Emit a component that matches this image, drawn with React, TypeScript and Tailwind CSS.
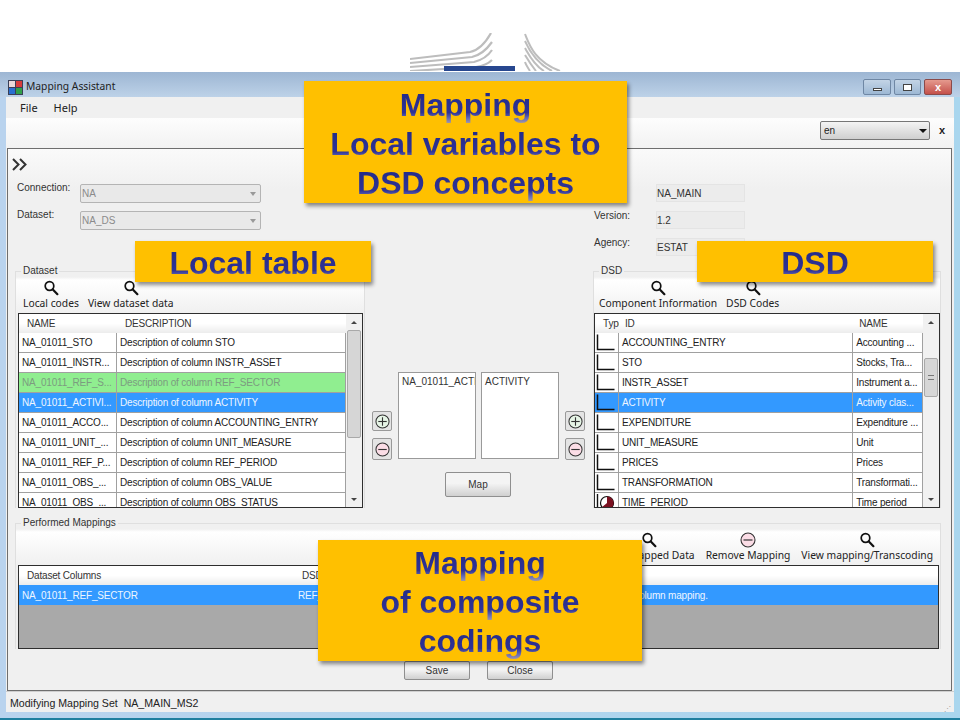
import type { ReactNode } from "react";

const sans = "font-['Liberation_Sans',Arial,sans-serif]";
const ui = "font-['Noto_Sans','Open_Sans',sans-serif]";

function Lens() {
  return (
    <svg width="16" height="16" viewBox="0 0 16 16" fill="none" stroke="#111" className="shrink-0">
      <circle cx="6.5" cy="6" r="4.3" strokeWidth="1.7" />
      <path d="M9.8 9.4l4.6 4.8" strokeWidth="2.2" strokeLinecap="round" />
    </svg>
  );
}

function RoundSign({ plus, size = 15 }: { plus?: boolean; size?: number }) {
  return (
    <svg width={size} height={size} viewBox="0 0 16 16" className="shrink-0">
      <circle cx="8" cy="8" r="7" fill={plus ? "#e6f5e6" : "#fbdde6"} stroke="#333" strokeWidth="1.1" />
      <path d="M3.5 8h9" stroke="#333" strokeWidth="1.2" />
      {plus ? <path d="M8 3.5v9" stroke="#333" strokeWidth="1.2" /> : null}
    </svg>
  );
}

function AxisIcon() {
  return (
    <svg width="21" height="19" viewBox="0 0 21 19" fill="none" stroke="#111" strokeWidth="1.5" className="shrink-0">
      <path d="M2.5 1.5v15h17" />
    </svg>
  );
}

function TimeIcon() {
  return (
    <svg width="21" height="19" viewBox="0 0 21 19" className="shrink-0">
      <path d="M2.5 1v17" stroke="#111" strokeWidth="1.4" />
      <circle cx="12" cy="10" r="6.5" fill="#fff" stroke="#111" strokeWidth="1.2" />
      <path d="M12 10V3.5a6.5 6.5 0 1 1-5 10.6z" fill="#7a1020" />
    </svg>
  );
}

function Logo() {
  return (
    <svg width="160" height="38" viewBox="0 0 160 38" className="block" fill="none">
      <g stroke="#bdbdbd" strokeWidth="2.2">
        <path d="M0 26L60 19C70 17 76 9 81 0" />
        <path d="M0 30L62 24C71 22 77 16 82 9" />
        <path d="M0 34L64 29C72 27 78 23 82 17" />
        <path d="M0 38L66 34C73 33 78 31 82 27" />
      </g>
      <rect x="34" y="33" width="71" height="5" fill="#27478f" />
      <g stroke="#bdbdbd" strokeWidth="2">
        <path d="M115 1C119 11 124 28 150 38" />
        <path d="M115 8C119 17 126 30 142 38" />
        <path d="M115 15C119 22 124 32 134 38" />
        <path d="M115 22C118 27 122 33 126 38" />
        <path d="M115 29C116 32 118 35 120 38" />
      </g>
    </svg>
  );
}

function Combo({ value }: { value: string }) {
  return (
    <div className="flex h-[19px] w-[181px] items-center rounded-[2px] border border-[#b4b4b4] bg-[#e9e9e9] pl-[1px] text-[10px] text-[#8b8b8b]">
      <span className="flex-1">{value}</span>
      <span className="mr-[4px] ml-[4px] h-0 w-0 border-x-[3.5px] border-t-[4px] border-x-transparent border-t-[#999]" />
    </div>
  );
}

function Field({ label, value }: { label: string; value: string }) {
  return (
    <div className="flex items-center">
      <span className="w-[62px] -translate-y-[5px] text-[10px] text-[#333]">{label}</span>
      <div className="flex h-[18px] w-[89px] items-center border border-[#e4e4e4] bg-[#ececec] text-[10px] text-[#333]">
        {value}
      </div>
    </div>
  );
}

function ToolButton({ label, icon, className = "" }: { label: string; icon?: ReactNode; className?: string }) {
  return (
    <div className={`flex flex-col items-center ${className}`}>
      {icon ?? <Lens />}
      <span className={`${ui} whitespace-nowrap text-[10.3px] leading-[14px] text-[#222]`}>{label}</span>
    </div>
  );
}

function Group({ title, className, children }: { title: string; className: string; children: ReactNode }) {
  return (
    <div className={`relative border border-b-0 border-[#dfdfdf] ${className}`}>
      <span className="absolute -top-[7px] left-[5px] bg-[#f0f0f0] px-[2px] text-[10px] leading-[12px] text-[#333]">
        {title}
      </span>
      {children}
    </div>
  );
}

function Scrollbar({ before, thumb }: { before: number; thumb: number }) {
  return (
    <div className="flex w-[16px] shrink-0 flex-col items-center bg-[#f1f1f1]">
      <div className="flex h-[16px] items-center">
        <span className="h-0 w-0 border-x-[3px] border-b-[3px] border-x-transparent border-b-[#444]" />
      </div>
      <div className="shrink-0" style={{ height: before }} />
      <div
        className="flex w-[14px] shrink-0 items-center justify-center rounded-[2px] border border-[#a9a9a9] bg-[#d6d6d6]"
        style={{ height: thumb }}
      >
        {thumb < 60 ? <span className="h-[5px] w-[6px] border-y border-[#777]" /> : null}
      </div>
      <div className="flex-1" />
      <div className="flex h-[16px] items-center">
        <span className="h-0 w-0 border-x-[3px] border-t-[3px] border-x-transparent border-t-[#444]" />
      </div>
    </div>
  );
}

type Cell = { text?: string; icon?: ReactNode };
type RowKind = "plain" | "mapped" | "selected";

function Row({ cells, widths, kind }: { cells: Cell[]; widths: string[]; kind: RowKind }) {
  const color =
    kind === "selected"
      ? "bg-[#3399ff] text-[#eef6ff]"
      : kind === "mapped"
        ? "bg-[#90ee90] text-[#7c9c80]"
        : "bg-white text-[#222]";
  return (
    <div className={`flex h-[20px] shrink-0 border-b border-[#a0a0a0] ${color}`}>
      {cells.map((cell, i) => (
        <div
          key={i}
          className={`flex items-center overflow-hidden whitespace-nowrap border-r border-[#a0a0a0] ${cell.icon ? "" : "pl-[3px]"} ${widths[i]}`}
        >
          {cell.icon ?? cell.text}
        </div>
      ))}
    </div>
  );
}

const localRows: { cells: string[]; kind?: RowKind }[] = [
  { cells: ["NA_01011_STO", "Description of column STO"] },
  { cells: ["NA_01011_INSTR...", "Description of column INSTR_ASSET"] },
  { cells: ["NA_01011_REF_S...", "Description of column REF_SECTOR"], kind: "mapped" },
  { cells: ["NA_01011_ACTIVI...", "Description of column ACTIVITY"], kind: "selected" },
  { cells: ["NA_01011_ACCO...", "Description of column ACCOUNTING_ENTRY"] },
  { cells: ["NA_01011_UNIT_...", "Description of column UNIT_MEASURE"] },
  { cells: ["NA_01011_REF_P...", "Description of column REF_PERIOD"] },
  { cells: ["NA_01011_OBS_...", "Description of column OBS_VALUE"] },
  { cells: ["NA_01011_OBS_...", "Description of column OBS_STATUS"] },
];

const dsdRows: { id: string; name: string; kind?: RowKind; time?: boolean }[] = [
  { id: "ACCOUNTING_ENTRY", name: "Accounting ..." },
  { id: "STO", name: "Stocks, Tra..." },
  { id: "INSTR_ASSET", name: "Instrument a..." },
  { id: "ACTIVITY", name: "Activity clas...", kind: "selected" },
  { id: "EXPENDITURE", name: "Expenditure ..." },
  { id: "UNIT_MEASURE", name: "Unit" },
  { id: "PRICES", name: "Prices" },
  { id: "TRANSFORMATION", name: "Transformati..." },
  { id: "TIME_PERIOD", name: "Time period", time: true },
];

function HeaderCell({ label, className }: { label: string; className: string }) {
  return <div className={`flex items-center overflow-hidden whitespace-nowrap pl-[8px] ${className}`}>{label}</div>;
}

function Header({ children }: { children: ReactNode }) {
  return (
    <div className="flex h-[19px] shrink-0 bg-[linear-gradient(#ffffff_50%,#ececec)] text-[#333]">{children}</div>
  );
}

function LocalTable() {
  const widths = ["w-[98px]", "w-[229px]"];
  return (
    <div className="mr-[1px] ml-[2px] flex h-[195px] overflow-hidden border-[1.5px] border-[#2e2e2e] bg-white text-[10px] tracking-[-0.18px]">
      <div className="min-w-0 flex-1 overflow-hidden">
        <Header>
          <HeaderCell label="NAME" className="w-[98px]" />
          <HeaderCell label="DESCRIPTION" className="w-[229px]" />
        </Header>
        {localRows.map((r, i) => (
          <Row key={i} widths={widths} kind={r.kind ?? "plain"} cells={r.cells.map((text) => ({ text }))} />
        ))}
      </div>
      <Scrollbar before={0} thumb={108} />
    </div>
  );
}

function DsdTable() {
  const widths = ["w-[24px]", "w-[235px]", "w-[70px]"];
  return (
    <div className="flex h-[195px] overflow-hidden border-[1.5px] border-[#2e2e2e] bg-white text-[10px] tracking-[-0.18px]">
      <div className="min-w-0 flex-1 overflow-hidden">
        <Header>
          <HeaderCell label="Type" className="w-[24px]" />
          <HeaderCell label="ID" className="w-[235px] !pl-[6px]" />
          <HeaderCell label="NAME" className="w-[70px] !pl-[6px]" />
        </Header>
        {dsdRows.map((r, i) => (
          <Row
            key={i}
            widths={widths}
            kind={r.kind ?? "plain"}
            cells={[{ icon: r.time ? <TimeIcon /> : <AxisIcon /> }, { text: r.id }, { text: r.name }]}
          />
        ))}
      </div>
      <Scrollbar before={28} thumb={39} />
    </div>
  );
}

function SignButtons() {
  return (
    <div className="flex w-[20px] flex-col gap-[7px]">
      {[true, false].map((plus) => (
        <div
          key={String(plus)}
          className={`flex w-[20px] items-center justify-center rounded-[2px] border border-[#999] bg-[#e4e4e4] ${plus ? "h-[20px]" : "h-[22px]"}`}
        >
          <RoundSign plus={plus} />
        </div>
      ))}
    </div>
  );
}

function PushButton({ label, className }: { label: string; className: string }) {
  return (
    <div
      className={`flex items-center justify-center rounded-[2px] border border-[#8f8f8f] bg-[linear-gradient(#f4f4f4_45%,#d0d0d0)] text-[10px] text-[#333] ${className}`}
    >
      {label}
    </div>
  );
}

function CalloutLine({ text }: { text: string }) {
  return (
    <span className="block bg-[linear-gradient(#1f2a86_0%,#2f3296_68%,#6a6fb8_84%,#b9a9a0_100%)] bg-clip-text text-transparent">
      {text}
    </span>
  );
}

function Callout({ lines, className }: { lines: string[]; className: string }) {
  return (
    <div
      className={`absolute flex flex-col items-center justify-center bg-[#ffc000] pt-[4px] text-center text-[32px] leading-[39px] font-bold shadow-[2px_3px_4px_rgba(0,0,0,0.45)] ${sans} ${className}`}
    >
      {lines.map((line) => (
        <CalloutLine key={line} text={line} />
      ))}
    </div>
  );
}

function CaptionButton({ className, children }: { className: string; children: ReactNode }) {
  return (
    <div className={`flex h-[16px] items-center justify-center rounded-[2px] border border-[#6f87a4] ${className}`}>
      {children}
    </div>
  );
}

export default function App() {
  return (
    <div className={`relative flex h-[720px] w-[960px] flex-col overflow-hidden bg-white ${sans}`}>
      <div className="h-[72px] shrink-0 overflow-hidden pt-[33px] pl-[410px]">
        <Logo />
      </div>

      <div className="flex min-h-0 flex-1 flex-col border-b-[2px] border-[#1f7f9f] bg-[linear-gradient(90deg,#b9d3ee,#a9d6ee)] pb-[6px]">
        <div className="flex h-[25px] shrink-0 items-center bg-[linear-gradient(#9db6d3,#bdd2e8)] pt-[5px] pr-[8px] pl-[8px] text-[10.3px] text-[#222]">
          <svg width="15" height="15" viewBox="0 0 15 15" className="mr-[3px] shrink-0">
            <rect width="15" height="15" fill="#3a3f56" />
            <rect x="1" y="1" width="6" height="6" fill="#e9d9d9" />
            <rect x="8" y="1" width="6" height="6" fill="#d63b3b" />
            <rect x="1" y="8" width="6" height="6" fill="#2a6fd0" />
            <rect x="8" y="8" width="6" height="6" fill="#31a04a" />
          </svg>
          <span className={ui}>Mapping Assistant</span>
          <div className="ml-auto flex gap-[3px]">
            <CaptionButton className="w-[28px] bg-[linear-gradient(#c3d4e6,#9db8d4)]">
              <span className="mt-[4px] h-[3px] w-[9px] border border-[#444] bg-white" />
            </CaptionButton>
            <CaptionButton className="w-[27px] bg-[linear-gradient(#c3d4e6,#9db8d4)]">
              <span className="h-[7px] w-[9px] border border-[#444] bg-white" />
            </CaptionButton>
            <CaptionButton className="w-[28px] border-[#8a4a4a] bg-[linear-gradient(#e59a8e,#c4504a)]">
              <span className="text-[11px] leading-none font-bold text-white">x</span>
            </CaptionButton>
          </div>
        </div>

        <div className="mx-[6px] flex min-h-0 flex-1 flex-col bg-[#f0f0f0]">
          <div className={`flex h-[21px] shrink-0 items-center gap-[16px] pt-[2px] pl-[14px] text-[11px] text-[#222] ${ui}`}>
            <span>File</span>
            <span>Help</span>
          </div>

          <div className="flex h-[30px] shrink-0 items-center justify-end bg-[linear-gradient(#fdfdfd,#f2f2f2)] pr-[9px] pb-[5px]">
            <div className="flex h-[19px] w-[110px] items-center rounded-[2px] border border-[#777] bg-[linear-gradient(#f4f4f4,#cfcfcf)] pl-[3px] text-[10px] text-[#222]">
              <span className="flex-1">en</span>
              <span className="mr-[2px] h-0 w-0 border-x-[4px] border-t-[4px] border-x-transparent border-t-[#111]" />
            </div>
            <span className="ml-[9px] w-[6px] text-[11px] font-bold text-[#222]">x</span>
          </div>

          <div className="mr-[2px] ml-[1px] flex h-[543px] shrink-0 flex-col border-[1.5px] border-[#6e6e6e] bg-[linear-gradient(#fafafa,#f0f0f0_40px)]">
            <svg width="16" height="13" viewBox="0 0 16 13" fill="none" stroke="#333" strokeWidth="2" className="mt-[9px] ml-[4px] shrink-0">
              <path d="M1 1l5.5 5.5L1 12M8 1l5.5 5.5L8 12" />
            </svg>

            <div className="mt-[13px] flex h-[87px] shrink-0 pl-[9px]">
              <div className="flex w-[577px] flex-col gap-[8px]">
                {[
                  ["Connection:", "NA"],
                  ["Dataset:", "NA_DS"],
                ].map(([label, value]) => (
                  <div key={label} className="flex items-center">
                    <span className="w-[63px] -translate-y-[6px] text-[10px] text-[#333]">{label}</span>
                    <Combo value={value} />
                  </div>
                ))}
              </div>
              <div className="flex flex-col gap-[9px]">
                <Field label="ID:" value="NA_MAIN" />
                <Field label="Version:" value="1.2" />
                <Field label="Agency:" value="ESTAT" />
              </div>
            </div>

            <div className="flex h-[244px] shrink-0 pl-[7px]">
              <Group title="Dataset" className="h-[237px] w-[350px]">
                <div className="flex h-[41px] items-end gap-[9px] bg-[linear-gradient(#f0f0f0_5px,#ffffff_8px,#f0f0f0)] pb-[3px] pl-[7px]">
                  <ToolButton label="Local codes" />
                  <ToolButton label="View dataset data" />
                </div>
                <LocalTable />
              </Group>

              <div className="w-[228px] shrink-0 pt-[101px]">
                <div className="flex items-start gap-[6px] pl-[7px]">
                  <div className="pt-[39px]">
                    <SignButtons />
                  </div>
                  <div className="flex gap-[5px]">
                    {["NA_01011_ACTI", "ACTIVITY"].map((text) => (
                      <div
                        key={text}
                        className="h-[87px] w-[78px] overflow-hidden whitespace-nowrap border border-[#9a9a9a] bg-white pt-[1px] pl-[3px] text-[10px] text-[#333]"
                      >
                        {text}
                      </div>
                    ))}
                  </div>
                  <div className="pt-[39px]">
                    <SignButtons />
                  </div>
                </div>
                <PushButton label="Map" className="mt-[12px] ml-[80px] h-[25px] w-[66px]" />
              </div>

              <Group title="DSD" className="h-[237px] w-[348px]">
                <div className="flex h-[41px] items-end gap-[9px] bg-[linear-gradient(#f0f0f0_5px,#ffffff_8px,#f0f0f0)] pb-[3px] pl-[5px]">
                  <ToolButton label="Component Information" />
                  <ToolButton label="DSD Codes" />
                </div>
                <DsdTable />
              </Group>
            </div>

            <div className="shrink-0 pt-[8px] pb-[12px] pl-[7px]">
              <Group title="Performed Mappings" className="h-[126px] w-[926px]">
                <div className="flex h-[41px] items-end justify-end gap-[11px] bg-[linear-gradient(#f0f0f0_5px,#ffffff_8px,#f0f0f0)] pr-[7px] pb-[3px]">
                  <ToolButton label="View Mapped Data" />
                  <ToolButton label="Remove Mapping" icon={<RoundSign size={16} />} />
                  <ToolButton label="View mapping/Transcoding" />
                </div>
                <div className="mr-[1px] ml-[2px] flex h-[84px] flex-col overflow-hidden border-[1.5px] border-[#2e2e2e] bg-[#a9a9a9] text-[10px] tracking-[-0.18px]">
                  <Header>
                    <HeaderCell label="Dataset Columns" className="w-[275px]" />
                    <HeaderCell label="DSD Concepts" className="w-[280px]" />
                    <HeaderCell label="Type" className="flex-1" />
                  </Header>
                  <div className="flex h-[20px] shrink-0 items-center bg-[#3399ff] text-[#eef6ff]">
                    <span className="w-[279px] pl-[3px]">NA_01011_REF_SECTOR</span>
                    <span className="w-[307px]">REF_SECTOR</span>
                    <span>Single column mapping.</span>
                  </div>
                </div>
              </Group>
            </div>

            <div className="flex shrink-0 gap-[17px] pl-[396px]">
              <PushButton label="Save" className="h-[19px] w-[66px]" />
              <PushButton label="Close" className="h-[19px] w-[66px]" />
            </div>
          </div>

          <div className="flex min-h-0 flex-1 items-center justify-between border-t border-[#cfcfcf] pt-[3px] pl-[4px] text-[10.6px] text-[#222]">
            <span>Modifying Mapping Set&nbsp; NA_MAIN_MS2</span>
            <span className="mt-[10px] mr-[2px] text-[7px] leading-none tracking-[1px] text-[#999]">⋰</span>
          </div>
        </div>
      </div>

      <Callout lines={["Mapping", "Local variables to", "DSD concepts"]} className="top-[81px] left-[304px] h-[122px] w-[323px]" />
      <Callout lines={["Local table"]} className="top-[241px] left-[135px] h-[41px] w-[236px]" />
      <Callout lines={["DSD"]} className="top-[241px] left-[697px] h-[41px] w-[236px]" />
      <Callout lines={["Mapping", "of composite", "codings"]} className="top-[540px] left-[318px] h-[121px] w-[324px]" />
    </div>
  );
}
